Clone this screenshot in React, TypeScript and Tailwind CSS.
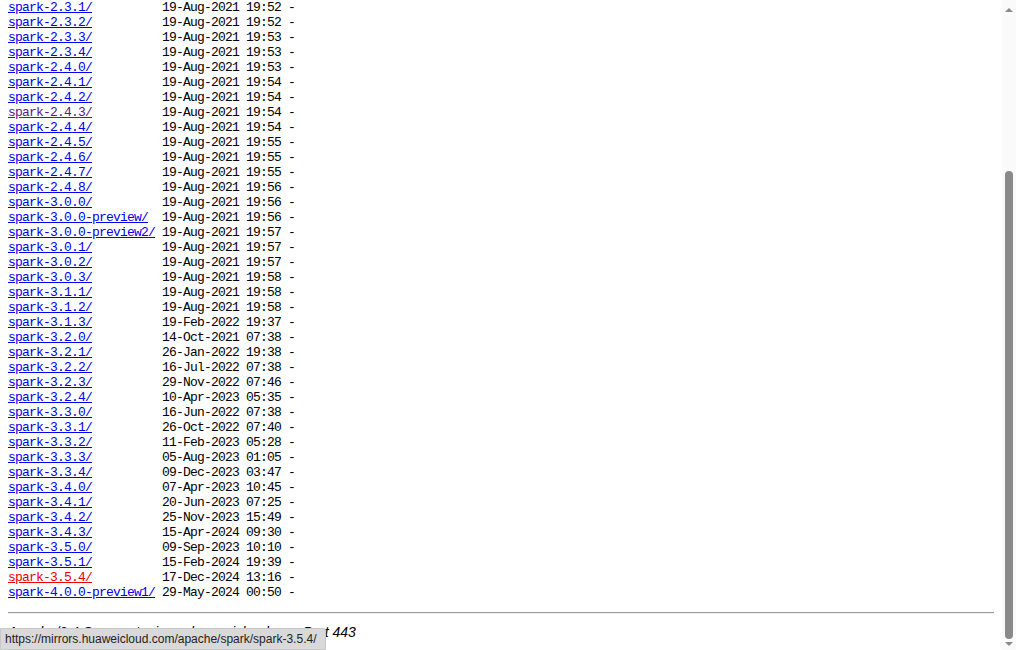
import React from "react";

const rows: [string, string, string?][] = [
  ["spark-2.3.1/", "19-Aug-2021 19:52"],
  ["spark-2.3.2/", "19-Aug-2021 19:52"],
  ["spark-2.3.3/", "19-Aug-2021 19:53"],
  ["spark-2.3.4/", "19-Aug-2021 19:53"],
  ["spark-2.4.0/", "19-Aug-2021 19:53"],
  ["spark-2.4.1/", "19-Aug-2021 19:54"],
  ["spark-2.4.2/", "19-Aug-2021 19:54"],
  ["spark-2.4.3/", "19-Aug-2021 19:54", "visited"],
  ["spark-2.4.4/", "19-Aug-2021 19:54"],
  ["spark-2.4.5/", "19-Aug-2021 19:55"],
  ["spark-2.4.6/", "19-Aug-2021 19:55"],
  ["spark-2.4.7/", "19-Aug-2021 19:55"],
  ["spark-2.4.8/", "19-Aug-2021 19:56"],
  ["spark-3.0.0/", "19-Aug-2021 19:56"],
  ["spark-3.0.0-preview/", "19-Aug-2021 19:56"],
  ["spark-3.0.0-preview2/", "19-Aug-2021 19:57"],
  ["spark-3.0.1/", "19-Aug-2021 19:57"],
  ["spark-3.0.2/", "19-Aug-2021 19:57"],
  ["spark-3.0.3/", "19-Aug-2021 19:58"],
  ["spark-3.1.1/", "19-Aug-2021 19:58"],
  ["spark-3.1.2/", "19-Aug-2021 19:58"],
  ["spark-3.1.3/", "19-Feb-2022 19:37"],
  ["spark-3.2.0/", "14-Oct-2021 07:38"],
  ["spark-3.2.1/", "26-Jan-2022 19:38"],
  ["spark-3.2.2/", "16-Jul-2022 07:38"],
  ["spark-3.2.3/", "29-Nov-2022 07:46"],
  ["spark-3.2.4/", "10-Apr-2023 05:35"],
  ["spark-3.3.0/", "16-Jun-2022 07:38"],
  ["spark-3.3.1/", "26-Oct-2022 07:40"],
  ["spark-3.3.2/", "11-Feb-2023 05:28"],
  ["spark-3.3.3/", "05-Aug-2023 01:05"],
  ["spark-3.3.4/", "09-Dec-2023 03:47"],
  ["spark-3.4.0/", "07-Apr-2023 10:45"],
  ["spark-3.4.1/", "20-Jun-2023 07:25"],
  ["spark-3.4.2/", "25-Nov-2023 15:49"],
  ["spark-3.4.3/", "15-Apr-2024 09:30"],
  ["spark-3.5.0/", "09-Sep-2023 10:10"],
  ["spark-3.5.1/", "15-Feb-2024 19:39"],
  ["spark-3.5.4/", "17-Dec-2024 13:16", "active"],
  ["spark-4.0.0-preview1/", "29-May-2024 00:50"],
];

export default function App() {
  return (
    <div className="relative flex h-[650px] w-[1016px] overflow-hidden bg-white">
      <div className="flex-1 overflow-hidden px-2">
        <div
          className="whitespace-pre text-[13px] leading-[15px] tracking-[-0.8px] text-black"
          style={{ fontFamily: '"Liberation Mono", "Noto Sans CJK SC", monospace' }}
        >
          {rows.map(([name, date, kind]) => (
            <div key={name} className="h-[15px]">
              <a
                href="#"
                className={
                  "underline " +
                  (kind === "visited"
                    ? "text-[#551a8b]"
                    : kind === "active"
                    ? "text-[#ee0000]"
                    : "text-[#0000ee]")
                }
              >
                {name}
              </a>
              {" ".repeat(22 - name.length)}
              {date + " -"}
            </div>
          ))}
        </div>
        <div className="mt-[12px] h-[2px] border-t border-[#9a9a9a] border-b border-b-[#eeeeee]" />
        <div
          className="mt-[9px] whitespace-nowrap text-[14px] italic leading-[18px] text-black"
          style={{ fontFamily: '"Liberation Sans", Arial, sans-serif' }}
        >
          Apache/2.4 Server at mirrors.huaweicloud.com Port 443
        </div>
      </div>

      <div className="flex w-[14px] flex-col items-center bg-[#fafafa]">
        <svg width="8" height="6" viewBox="0 0 8 6" className="mt-[7px]">
          <path d="M0 5 L4 1 L8 5 Z" fill="#8a8a8a" />
        </svg>
        <div className="mt-[158px] h-[468px] w-[8px] rounded-[4px] bg-[#8a8a8a]" />
        <svg width="8" height="6" viewBox="0 0 8 6" className="mt-[2px]">
          <path d="M0 1 L4 5 L8 1 Z" fill="#8a8a8a" />
        </svg>
      </div>

      <div
        className="absolute bottom-0 left-0 flex h-[22px] w-[326px] items-center whitespace-nowrap rounded-tr-[3px] border border-[#c8c8c8] bg-[#d9d9d9] pl-[4px] text-[12px] text-[#222]"
        style={{ fontFamily: '"Liberation Sans", "Noto Sans", sans-serif' }}
      >
        https://mirrors.huaweicloud.com/apache/spark/spark-3.5.4/
      </div>
    </div>
  );
}
